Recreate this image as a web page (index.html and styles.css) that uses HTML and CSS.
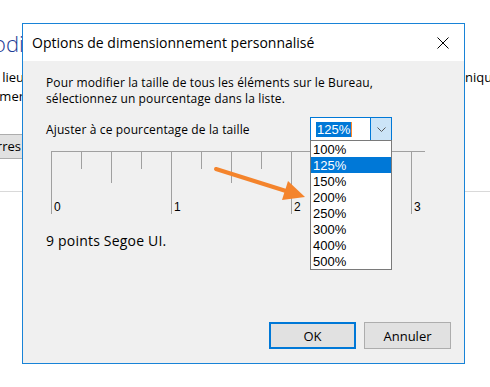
FILE: index.html
```html
<!DOCTYPE html>
<html lang="fr">
<head>
    <meta charset="UTF-8">
    <meta name="viewport" content="width=device-width, initial-scale=1.0">
    <title>Options de dimensionnement personnalisé</title>
    <link rel="stylesheet" href="styles.css">
</head>
<body>
    <div class="page">
        <div class="bg-row bg-title-row">
            <div class="bg-left"><span class="bg-title">Modi</span></div>
        </div>
        <div class="bg-row bg-text-row">
            <div class="bg-left"><span>Au lieu</span></div>
            <div class="bg-right"><span class="bg-cut">uniquement</span></div>
        </div>
        <div class="bg-row bg-text-row">
            <div class="bg-left"><span>fermer</span></div>
        </div>
        <div class="bg-row bg-button-row">
            <div class="bg-left"><span class="bg-button">Barres</span></div>
        </div>
        <div class="bg-separator"></div>
    </div>

    <div class="dialog">
        <div class="titlebar">
            <span class="title">Options de dimensionnement personnalisé</span>
            <span class="close">
                <svg width="12" height="12" viewBox="0 0 12 12">
                    <path d="M0.5 0.5 L11.5 11.5 M11.5 0.5 L0.5 11.5" stroke="#000" stroke-width="1" fill="none"/>
                </svg>
            </span>
        </div>

        <div class="dialog-body">
            <p class="intro">Pour modifier la taille de tous les éléments sur le Bureau,<br>sélectionnez un pourcentage dans la liste.</p>

            <div class="size-row">
                <label for="pourcentage">Ajuster à ce pourcentage de la taille</label>
                <div class="combo" id="pourcentage">
                    <div class="combo-value"><span class="selected-text">125%</span></div>
                    <div class="combo-button">
                        <svg width="9" height="5" viewBox="0 0 9 5">
                            <path d="M0.5 0.5 L4.5 4.5 L8.5 0.5" stroke="#5a5a5a" stroke-width="1" fill="none"/>
                        </svg>
                    </div>
                    <ul class="combo-list">
                        <li>100%</li>
                        <li class="active">125%</li>
                        <li>150%</li>
                        <li>200%</li>
                        <li>250%</li>
                        <li>300%</li>
                        <li>400%</li>
                        <li>500%</li>
                    </ul>
                </div>
            </div>

            <svg class="ruler" width="374" height="63" viewBox="0 0 374 63">
                <g stroke="#a0a0a0" stroke-width="1">
                    <line x1="0" y1="0.5" x2="374" y2="0.5"/>
                    <line x1="0.5" y1="0" x2="0.5" y2="63"/>
                    <line x1="30.5" y1="0" x2="30.5" y2="18"/>
                    <line x1="60.5" y1="0" x2="60.5" y2="32"/>
                    <line x1="90.5" y1="0" x2="90.5" y2="18"/>
                    <line x1="120.5" y1="0" x2="120.5" y2="63"/>
                    <line x1="150.5" y1="0" x2="150.5" y2="18"/>
                    <line x1="180.5" y1="0" x2="180.5" y2="32"/>
                    <line x1="210.5" y1="0" x2="210.5" y2="18"/>
                    <line x1="240.5" y1="0" x2="240.5" y2="63"/>
                    <line x1="270.5" y1="0" x2="270.5" y2="18"/>
                    <line x1="300.5" y1="0" x2="300.5" y2="32"/>
                    <line x1="330.5" y1="0" x2="330.5" y2="18"/>
                    <line x1="360.5" y1="0" x2="360.5" y2="63"/>
                </g>
                <g class="ruler-labels">
                    <text x="3" y="60">0</text>
                    <text x="123" y="60">1</text>
                    <text x="243" y="60">2</text>
                    <text x="363" y="60">3</text>
                </g>
            </svg>

            <p class="sample">9 points Segoe UI.</p>

            <div class="actions">
                <button class="btn btn-default">OK</button>
                <button class="btn">Annuler</button>
            </div>

            <svg class="annotation" width="441" height="302" viewBox="0 0 441 302">
                <line x1="193" y1="108" x2="263" y2="130" stroke="#f4842c" stroke-width="4" stroke-linecap="round"/>
                <polygon points="282,136 265,120 259,139" fill="#f4842c"/>
            </svg>
        </div>
    </div>
</body>
</html>
```

FILE: styles.css
```css
body {
    margin: 0;
    width: 490px;
    height: 387px;
    overflow: hidden;
    background-color: #ffffff;
    font-family: "Segoe UI", "Open Sans", sans-serif;
    font-size: 12px;
    color: #000000;
    position: relative;
}

/* page behind the dialog */
.page {
    padding-top: 28px;
}

.bg-row {
    display: flex;
    justify-content: space-between;
    white-space: nowrap;
}

.bg-left {
    width: 24px;
    display: flex;
    justify-content: flex-end;
}

.bg-right {
    width: 25px;
}

.bg-cut {
    margin-left: -8px;
}

.bg-title {
    font-size: 22px;
    font-weight: 300;
    color: #1e3c96;
    line-height: 30px;
}

.bg-title-row {
    margin-bottom: 10px;
}

.bg-text-row {
    line-height: 19px;
    font-size: 13px;
}

.bg-button-row {
    margin-top: 28px;
}

.bg-button {
    background-color: #e1e1e1;
    border: 1px solid #adadad;
    padding: 2px 30px 3px 10px;
    margin-right: -28px;
    font-size: 13px;
}

.bg-separator {
    margin-top: 32px;
    border-top: 1px solid #d9d9d9;
}

/* dialog window */
.dialog {
    position: absolute;
    left: 22px;
    top: 23px;
    width: 441px;
    height: 339px;
    border: 1px solid #1883d7;
    background-color: #f0f0f0;
    display: flex;
    flex-direction: column;
}

.titlebar {
    height: 37px;
    background-color: #ffffff;
    display: flex;
    align-items: center;
    justify-content: space-between;
    padding-left: 9px;
}

.title {
    font-size: 14px;
}

.close {
    width: 42px;
    height: 37px;
    display: flex;
    align-items: center;
    justify-content: center;
}

.dialog-body {
    flex: 1;
    position: relative;
    padding: 14px 13px 14px 23px;
    display: flex;
    flex-direction: column;
}

.intro {
    margin: 0;
    line-height: 16px;
    letter-spacing: 0.13px;
}

.size-row {
    margin-top: 10px;
    display: grid;
    grid-template-columns: 264px 82px;
    align-items: center;
    letter-spacing: 0.13px;
}

.combo {
    position: relative;
    height: 22px;
    border: 1px solid #0078d7;
    background-color: #ffffff;
    display: flex;
    font-family: "Liberation Sans", Arial, sans-serif;
    font-size: 13px;
    letter-spacing: 0;
}

.combo-value {
    flex: 1;
    display: flex;
    align-items: center;
    padding-left: 5px;
}

.selected-text {
    background-color: #0078d7;
    color: #ffffff;
    line-height: 15px;
    padding: 0 1px;
    border-right: 1px solid #ff8728;
}

.combo-button {
    width: 20px;
    background-color: #cce4f7;
    border-left: 1px solid #0078d7;
    display: flex;
    align-items: center;
    justify-content: center;
}

.combo-list {
    position: absolute;
    top: 100%;
    left: -1px;
    width: 80px;
    margin: 0;
    padding: 0;
    list-style: none;
    background-color: #ffffff;
    border: 1px solid #7a7a7a;
    z-index: 2;
}

.combo-list li {
    height: 16px;
    line-height: 17px;
    padding-left: 2px;
}

.combo-list li.active {
    background-color: #0078d7;
    color: #ffffff;
}

.ruler {
    display: block;
    margin-top: 10px;
    margin-left: 5px;
}

.ruler-labels {
    font-family: "Liberation Sans", Arial, sans-serif;
    font-size: 12px;
    fill: #000000;
}

.sample {
    margin: 17px 0 0;
    font-size: 14px;
    line-height: 19px;
    letter-spacing: 0.2px;
}

.actions {
    margin-top: auto;
    display: flex;
    justify-content: flex-end;
    gap: 8px;
}

.btn {
    width: 87px;
    height: 27px;
    background-color: #e1e1e1;
    border: 1px solid #adadad;
    font-family: "Segoe UI", "Open Sans", sans-serif;
    font-size: 13px;
    color: #000000;
    padding: 0;
}

.btn-default {
    border: 2px solid #0078d7;
}

.annotation {
    position: absolute;
    left: 0;
    top: 0;
    pointer-events: none;
}
```
